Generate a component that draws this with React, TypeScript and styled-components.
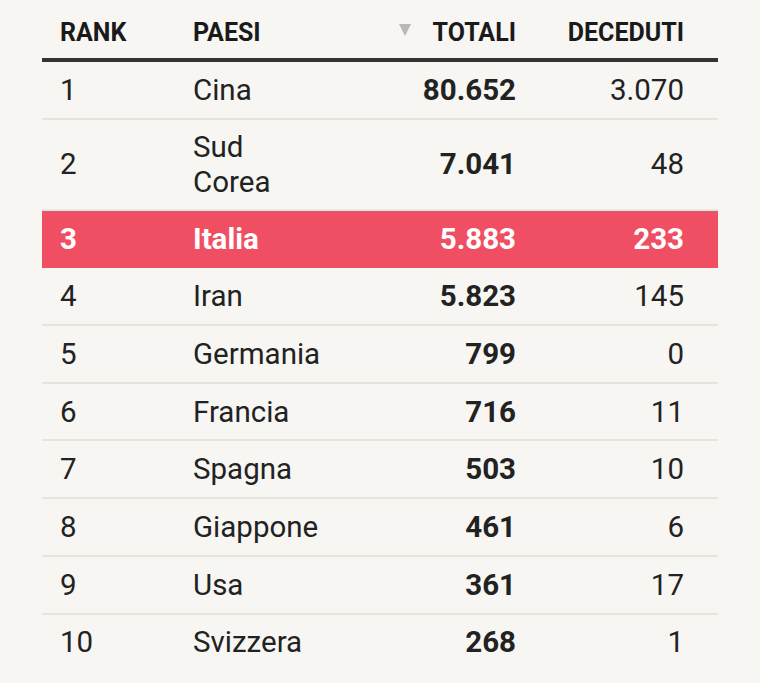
import React from "react";
import styled, { createGlobalStyle } from "styled-components";

const Global = createGlobalStyle`
  html, body { margin: 0; padding: 0; background: #f7f6f2; }
  body { font-family: Roboto, "Liberation Sans", sans-serif; color: #222; }
`;

const Page = styled.div`
  padding: 0 42px;
  min-height: 683px;
  box-sizing: border-box;
`;

const cols = "151px 137px 186px 168px";

const HeaderRow = styled.div`
  display: grid;
  grid-template-columns: ${cols};
  padding: 19px 34px 11px 0;
  border-bottom: 4px solid #333;
  font-size: 25px;
  line-height: 28px;
  font-weight: 700;
  color: #1a1a1a;
`;

const HeadCell = styled.div<{ $align?: "left" | "right"; $pad?: number }>`
  text-align: ${(p) => p.$align || "left"};
  padding-left: ${(p) => p.$pad || 0}px;
  display: flex;
  align-items: center;
  justify-content: ${(p) => (p.$align === "right" ? "flex-end" : "flex-start")};
`;

const SortArrow = styled.span`
  width: 0;
  height: 0;
  border-left: 6.5px solid transparent;
  border-right: 6.5px solid transparent;
  border-top: 12px solid #b8b8b6;
  margin-right: 22px;
  margin-top: -6px;
`;

const Row = styled.div<{ $hl?: boolean }>`
  display: grid;
  grid-template-columns: ${cols};
  padding: 10px 34px 9px 0;
  min-height: 57.7px;
  box-sizing: border-box;
  align-items: center;
  border-bottom: 2px solid ${(p) => (p.$hl ? "#f04e63" : "#e6e4df")};
  background: ${(p) => (p.$hl ? "#f04e63" : "transparent")};
  box-shadow: ${(p) => (p.$hl ? "inset 0 1px 0 #dc5a6b" : "none")};
  color: ${(p) => (p.$hl ? "#fff" : "#222")};
  font-size: 29.5px;
  line-height: 35px;
  font-weight: ${(p) => (p.$hl ? 700 : 400)};
  &:last-child { border-bottom-color: transparent; }
`;

const Cell = styled.div<{ $align?: "left" | "right"; $bold?: boolean; $pad?: number }>`
  text-align: ${(p) => p.$align || "left"};
  padding-left: ${(p) => p.$pad || 0}px;
  font-weight: ${(p) => (p.$bold ? 700 : "inherit")};
  padding-right: ${(p) => (p.$align === "left" || !p.$align ? 8 : 0)}px;
`;

const data = [
  ["1", "Cina", "80.652", "3.070"],
  ["2", "Sud Corea", "7.041", "48"],
  ["3", "Italia", "5.883", "233"],
  ["4", "Iran", "5.823", "145"],
  ["5", "Germania", "799", "0"],
  ["6", "Francia", "716", "11"],
  ["7", "Spagna", "503", "10"],
  ["8", "Giappone", "461", "6"],
  ["9", "Usa", "361", "17"],
  ["10", "Svizzera", "268", "1"],
];

export default function App() {
  return (
    <Page>
      <Global />
      <HeaderRow>
        <HeadCell $pad={18}>RANK</HeadCell>
        <HeadCell>PAESI</HeadCell>
        <HeadCell $align="right">
          <SortArrow />
          TOTALI
        </HeadCell>
        <HeadCell $align="right">DECEDUTI</HeadCell>
      </HeaderRow>
      <div>
        {data.map(([r, n, t, d]) => (
          <Row key={r} $hl={n === "Italia"}>
            <Cell $pad={18}>{r}</Cell>
            <Cell>{n}</Cell>
            <Cell $align="right" $bold>{t}</Cell>
            <Cell $align="right">{d}</Cell>
          </Row>
        ))}
      </div>
    </Page>
  );
}
